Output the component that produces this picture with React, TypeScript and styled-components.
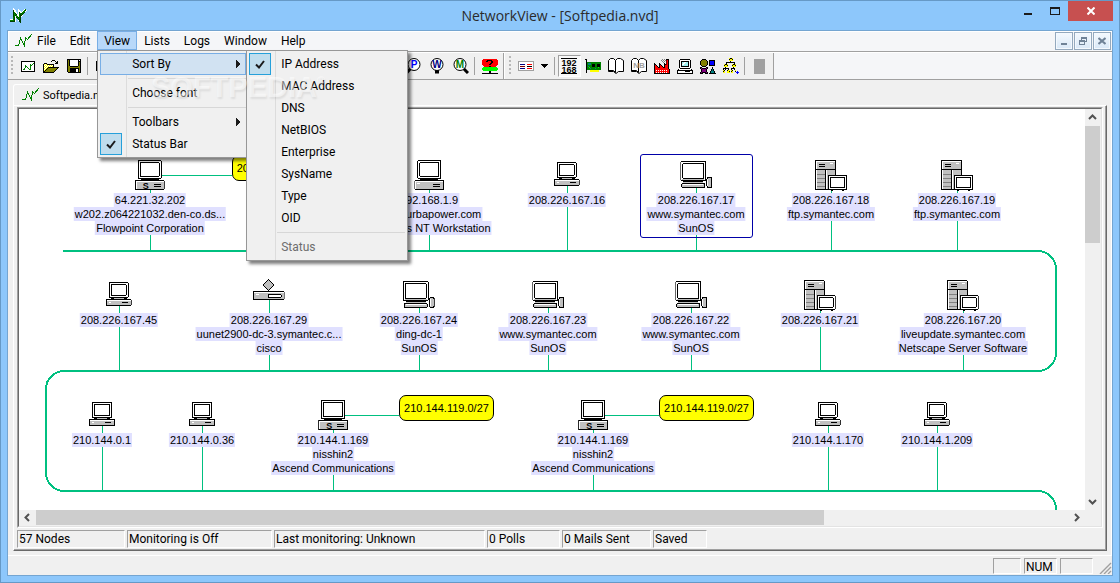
import React from 'react';
import styled, { createGlobalStyle, css } from 'styled-components';

const ui = 'Roboto, "Open Sans", sans-serif';
const arial = '"Liberation Sans", Arial, sans-serif';
const green = '#00c080';

const GlobalStyle = createGlobalStyle`
  * { box-sizing: border-box; }
  body { margin: 0; font-family: ${ui}; font-size: 12px; color: #000; background: #8dc7fb; }
  button { font: inherit; color: inherit; margin: 0; padding: 0; border: 0; background: none; }
  svg { display: block; flex: none; }
  ul { list-style: none; margin: 0; padding: 0; }
`;

/* ---------- window chrome ---------- */

const Frame = styled.div`
  display: flex;
  flex-direction: column;
  min-height: 100vh;
  padding: 0 6px 6px;
  border: 1px solid #6699c6;
  background: #8dc7fb;
`;

const TitleBar = styled.header`
  position: relative;
  display: flex;
  align-items: center;
  height: 29px;
  padding-left: 2px;
`;

const Title = styled.h1`
  flex: 1;
  margin: 0;
  padding-left: 79px;
  text-align: center;
  font-family: "Open Sans", "Noto Sans", sans-serif;
  font-size: 14px;
  font-weight: 400;
  line-height: 29px;
  color: #2b2b2b;
`;

const WindowButtons = styled.div`
  display: flex;
  align-self: flex-start;
`;

const WindowButton = styled.button<{ $close?: boolean }>`
  display: flex;
  align-items: center;
  justify-content: center;
  width: ${(p) => (p.$close ? 45 : 27)}px;
  height: 20px;
  background: ${(p) => (p.$close ? '#c75050' : 'transparent')};
`;

const Client = styled.div`
  flex: 1;
  display: flex;
  flex-direction: column;
  border: 1px solid #74a5d1;
  background: #f0f0f0;
`;

/* ---------- menus ---------- */

const MenuBar = styled.nav`
  display: flex;
  height: 21px;
  padding-left: 6px;
  border-bottom: 1px solid #a0a0a0;
  background: #f5f6f8;
  box-shadow: inset 1px 1px #fff;
`;

const MenuLogo = styled.span`
  width: 16px;
  padding-top: 3px;
`;

const MenuEntry = styled.div`
  position: relative;
  display: flex;
`;

const MenuTitle = styled.button<{ $open?: boolean }>`
  height: 19px;
  padding: 0 6px;
  border: 1px solid ${(p) => (p.$open ? '#78aee5' : 'transparent')};
  background: ${(p) => (p.$open ? '#b8d8f9' : 'transparent')};
  line-height: 19px;
`;

const Menu = styled.ul<{ $nested?: boolean }>`
  position: absolute;
  z-index: 2;
  top: ${(p) => (p.$nested ? '-3px' : '19px')};
  left: ${(p) => (p.$nested ? '146px' : '0')};
  width: ${(p) => (p.$nested ? 162 : 152)}px;
  padding: 2px;
  border: 1px solid #979797;
  background: linear-gradient(to right, transparent 28px, #dcdcdc 28px, #dcdcdc 29px, transparent 29px) #f0f0f0;
  box-shadow: 3px 3px 3px rgba(0, 0, 0, 0.5);
`;

const MenuItem = styled.li<{ $active?: boolean }>`
  position: relative;
  display: flex;
  height: 22px;
  ${(p) =>
    p.$active &&
    css`
      background: #d1e2f2;
      box-shadow: inset 0 0 0 1px #78aee5;
    `}
`;

const MenuCommand = styled.button`
  flex: 1;
  display: flex;
  align-items: center;
  text-align: left;
  line-height: 20px;
  white-space: nowrap;
  &:disabled { color: #6d6d6d; }
`;

const MenuCheck = styled.span<{ $on?: boolean }>`
  display: flex;
  align-items: center;
  justify-content: center;
  width: 22px;
  height: 22px;
  margin-right: 10px;
  border: 1px solid ${(p) => (p.$on ? '#26a0da' : 'transparent')};
  background: ${(p) => (p.$on ? '#c0dded' : 'transparent')};
`;

const MenuArrow = styled.span`
  margin-left: auto;
  padding-right: 5px;
`;

const MenuRule = styled.li`
  height: 1px;
  margin: 3px 0 3px 28px;
  background: #d7d7d7;
`;

const ChildButtons = styled.div`
  display: flex;
  gap: 1px;
  margin-left: auto;
  padding: 1px 1px 0 0;
`;

const ChildButton = styled.button`
  display: flex;
  align-items: center;
  justify-content: center;
  width: 18px;
  height: 18px;
  border: 1px solid #94a9be;
  background: linear-gradient(#f4f9fe, #d9e8f7);
  box-shadow: inset 0 0 0 1px #f4f9fe;
`;

/* ---------- toolbars ---------- */

const ToolbarRow = styled.div`
  display: flex;
  height: 28px;
  border-top: 1px solid #fff;
  border-bottom: 1px solid #a0a0a0;
  background: #f5f6f8;
`;

const Band = styled.div<{ $width?: number; $divided?: boolean }>`
  display: flex;
  align-items: center;
  width: ${(p) => (p.$width ? p.$width + 'px' : 'auto')};
  padding: ${(p) => (p.$divided ? '0 2px 0 1px' : '0 2px 0 0')};
  border-left: ${(p) => (p.$divided ? '1px solid #fff' : '0')};
  border-right: 1px solid #a0a0a0;
  background: #f0f0f0;
`;

const Grip = styled.span`
  width: 8px;
  height: 20px;
  background: repeating-linear-gradient(#b8b8b8 0 2px, transparent 2px 4px) 3px 0 / 2px 20px no-repeat;
`;

const ToolButton = styled.button<{ $pressed?: boolean; $narrow?: boolean }>`
  display: flex;
  align-items: center;
  justify-content: center;
  width: ${(p) => (p.$narrow ? 15 : 23)}px;
  height: 22px;
  ${(p) =>
    p.$pressed &&
    css`
      border: 1px solid;
      border-color: #a0a0a0 #fff #fff #a0a0a0;
      background: #f8f8f8;
    `}
`;

const ToolRule = styled.span`
  width: 6px;
  height: 18px;
  background: linear-gradient(#a0a0a0, #a0a0a0) 2px 0 / 1px 18px no-repeat;
`;

const ToolSpacer = styled.span`
  flex: 1;
`;

/* ---------- child window ---------- */

const Workspace = styled.main`
  flex: 1;
  display: flex;
  flex-direction: column;
  padding: 4px 4px 4px 5px;
  border-right: 1px solid #fff;
`;

const TabStrip = styled.div`
  display: flex;
  height: 21px;
`;

const Tab = styled.button`
  display: flex;
  align-items: center;
  gap: 4px;
  padding: 0 7px;
  border: 1px solid #fff;
  border-bottom: 0;
  border-radius: 3px 3px 0 0;
  font-size: 11px;
`;

const ChildFrame = styled.section`
  flex: 1;
  display: flex;
  flex-direction: column;
  padding: 1px 3px 0;
  border: 1px solid;
  border-color: #fff #696969 #696969 #fff;
  box-shadow: inset -1px -1px #a0a0a0;
`;

const ViewFrame = styled.div`
  flex: 1;
  display: flex;
  border: 1px solid;
  border-color: #a0a0a0 #fff #fff #a0a0a0;
`;

const View = styled.div`
  flex: 1;
  display: grid;
  grid-template-columns: minmax(0, 1fr) 16px;
  grid-template-rows: minmax(0, 1fr) 16px;
  border: 1px solid;
  border-color: #696969 #e3e3e3 #e3e3e3 #696969;
`;

const Canvas = styled.div`
  position: relative;
  overflow: hidden;
  background: #fff;
  font-family: ${arial};
  font-size: 11px;
`;

const Wires = styled.svg`
  position: absolute;
  top: 0;
  left: 0;
`;

const Node = styled.figure`
  position: absolute;
  display: flex;
  flex-direction: column;
  align-items: center;
  margin: 0;
  transform: translateX(-50%);
`;

const NodePicture = styled.div`
  display: flex;
  align-items: flex-start;
`;

const NodeLabel = styled.figcaption`
  display: flex;
  flex-direction: column;
  align-items: center;
  line-height: 14px;
  white-space: nowrap;
  span { padding: 0 1px; background: #e0e0ff; }
`;

const Selection = styled.div`
  position: absolute;
  width: 113px;
  height: 84px;
  border: 1px solid #0000a8;
  border-radius: 3px;
`;

const Subnet = styled.div`
  position: absolute;
  width: 95px;
  height: 26px;
  border: 1px solid #000;
  border-radius: 7px;
  background: #ff0;
  text-align: center;
  line-height: 24px;
  white-space: nowrap;
`;

const ScrollBar = styled.div<{ $vertical?: boolean }>`
  display: flex;
  flex-direction: ${(p) => (p.$vertical ? 'column' : 'row')};
  padding: ${(p) => (p.$vertical ? '0 1px 0 0' : '0 0 1px')};
  background: #f0f0f0;
`;

const ScrollButton = styled.button`
  display: flex;
  flex: 0 0 17px;
  align-items: center;
  justify-content: center;
`;

const ScrollTrack = styled.div<{ $vertical?: boolean }>`
  flex: 1;
  display: flex;
  flex-direction: ${(p) => (p.$vertical ? 'column' : 'row')};
`;

const ScrollThumb = styled.div<{ $share: string }>`
  flex: 0 0 ${(p) => p.$share};
  background: #cdcdcd;
`;

/* ---------- status bars ---------- */

const ChildStatus = styled.footer`
  display: flex;
  gap: 2px;
  height: 22px;
  padding: 2px 0;
`;

const MainStatus = styled.footer`
  display: flex;
  justify-content: flex-end;
  gap: 3px;
  height: 20px;
  padding: 2px 0 1px;
  border-top: 1px solid #fff;
`;

const StatusCell = styled.span<{ $width: number }>`
  width: ${(p) => p.$width}px;
  padding-left: 1px;
  border: 1px solid;
  border-color: #a0a0a0 #fff #fff #a0a0a0;
  line-height: 16px;
  white-space: nowrap;
`;

const SizeGrip = styled.span`
  display: flex;
  align-items: flex-end;
  width: 16px;
`;

const Watermark = styled.div`
  position: absolute;
  z-index: 3;
  top: 70px;
  left: 151px;
  font: 700 29px/34px ${arial};
  color: rgba(255, 255, 255, 0.5);
  text-shadow: 1px 2px 2px rgba(0, 0, 0, 0.08);
  pointer-events: none;
  sup { font-size: 11px; line-height: 10px; vertical-align: 13px; }
`;

/* ---------- drawings ---------- */

const Svg = ({ w, h, children }: { w: number; h: number; children: React.ReactNode }) => (
  <svg width={w} height={h} viewBox={`0 0 ${w} ${h}`} fill="none" shapeRendering="crispEdges" aria-hidden="true">
    {children}
  </svg>
);

/* Draws a bitmap from rows of palette letters; a dot is transparent. */
const palette: Record<string, string> = {
  k: '#000', w: '#fff', g: '#808080', c: '#c0c0c0', r: '#f00', R: '#800000', y: '#ff0', Y: '#808000',
  b: '#00f', B: '#000080', l: '#0f0', G: '#008000', t: '#008080', p: '#800080', a: '#a0f0f0', h: '#a0a0a0',
};
const Bitmap = ({ rows }: { rows: string[] }) => {
  const w = Math.max(...rows.map((r) => r.length));
  return (
    <Svg w={w} h={rows.length}>
      {rows.flatMap((row, y) =>
        [...row.matchAll(/([^.])\1*/g)].map((m) => (
          <rect key={`${m.index}-${y}`} x={m.index} y={y} width={m[0].length} height={1} fill={palette[m[1]]} />
        )),
      )}
    </Svg>
  );
};

const Pulse = () => (
  <Svg w={18} h={14}>
    <path d="M0.5 11.5H4.5L6.5 4.5L10.5 11.5L11.5 3.5L13.5 5.5L17.5 0.5" stroke="#008000" />
  </Svg>
);

const AppIcon = () => (
  <Svg w={18} h={15}>
    <path d="M1 12.5H5.5V3.5L10.5 11.5V4.5L12.5 6.5L16.5 1.5" stroke="#fff" strokeWidth="3" />
    <path d="M1 13H5V4.5L10.5 12V5L12.5 6.5L16.5 2" stroke="#004000" strokeWidth="2" />
    <path d="M1 12.5H4.5L5.5 5L10 11.5L11 5L12.5 6.5L16.5 1.5" stroke="#008000" strokeWidth="1" />
  </Svg>
);

const CheckMark = () => (
  <svg width="10" height="9" viewBox="0 0 10 9" fill="none" aria-hidden="true">
    <path d="M1 4.5L4 7.5L9 1" stroke="#1b1b1b" strokeWidth="2" />
  </svg>
);

const Chevron = ({ turn }: { turn: number }) => (
  <svg width="9" height="9" viewBox="0 0 9 9" fill="none" aria-hidden="true">
    <path d="M1 6L4.5 2.5L8 6" stroke="#505050" strokeWidth="2" transform={`rotate(${turn} 4.5 4.5)`} />
  </svg>
);

const Lens = ({ letter, color, side }: { letter: string; color: string; side: 'left' | 'down' | 'right' }) => (
  <svg width="17" height="16" viewBox="0 0 17 16" fill="none" aria-hidden="true">
    {side === 'left' && <path d="M4.5 10.5L1 14.5" stroke="#000" strokeWidth="3" />}
    {side === 'down' && <path d="M8 11V15.5" stroke="#000" strokeWidth="4" />}
    {side === 'right' && <path d="M11 10L16 15" stroke="#000" strokeWidth="3" />}
    <circle cx="8" cy="6.5" r="6" fill="#fff" stroke="#000" />
    <text x="8" y="10" textAnchor="middle" fontFamily="Liberation Sans" fontWeight="700" fontSize="10" fill={color}>
      {letter}
    </text>
  </svg>
);

const pulseDoc = [
  'kkkkkkkkkkkkkk', 'kwwwwwwwwwwwwk', 'kwwwwwwwwwwwGk', 'kwwwwwwwwGwGwk', 'kwwwGwwwwGGwwk', 'kwwwGGwwwGwwwk',
  'kwwwGwGwwGwwwk', 'kwwGwwwGwGwwwk', 'kwGGwwwwGGwwwk', 'kwwwwwwwwwwwwk', 'kkkkkkkkkkkkkk',
];
const openFolder = [
  '.........kkk....', '........k...k.k.', '.............kk.', '.kkk........kkk.', 'kywykkkkkkk.....', 'kwywywywywk.....',
  'kywywywywyk.....', 'kwywykkkkkkkkkkk', 'kywykYYYYYYYYYk.', 'kwykYYYYYYYYYk..', 'kykYYYYYYYYYk...', 'kkYYYYYYYYYk....',
  'kkkkkkkkkkk.....',
];
const disk = [
  'kkkkkkkkkkkkkk', 'kYkwwwwwwwwkwk', 'kYkwwwwwwwwkkk', 'kYkwwwwwwwwkYk', 'kYkwwwwwwwwkYk', 'kYkwwwwwwwwkYk',
  'kYkwwwwwwwwkYk', 'kYYkkkkkkkkYYk', 'kYYYYYYYYYYYYk', 'kYYkkkkkkkkkYk', 'kYYkkkkkkwwkYk', 'kYYkkkkkkwwkYk',
  'kYYkkkkkkwwkYk', '.kkkkkkkkkkkkk',
];
const sheet = [
  'kkkkkkkkkkkkkk', 'kwwwwwwwwwwwwk', 'kwwwwwwwwwwwwk', 'kwwwwwwwwwwwwk', 'kwwwwwwwwwwwwk', 'kwwwwwwwwwwwwk', 'kwwwwwwwwwwwwk',
  'kwwwwwwwwwwwwk', 'kwwwwwwwwwwwwk', 'kkkkkkkkkkkkkk',
];
const detailList = [
  'hhhhhhhhhhhhhhhh', 'hwwwwwwwwwwwwwwh', 'hwwwwwwwwwwwwwwh', 'hwBBBBBwwrrrrrwh', 'hwwwwwwwwwwwwwwh', 'hwRRRRRwwkkkkkwh',
  'hwwwwwwwwwwwwwwh', 'hwBBBBBwwrrrrrwh', 'hwwwwwwwwwwwwwwh', 'hhhhhhhhhhhhhhhh',
];
const card = [
  'kk..............', '.k..............', '.k..............', '.kGGGGGGGGGGGGGG', '.kGtttGGGGGGGGGG', '.kGtttGkkkGGkkkG', '.kGGGGGkkkGGkkkG',
  '.kGtGGGkkkGGkkkG', '.kGGlGGGGGGGGlGG', '.kGGGtGGGGtGGGGG', '.kGGGGGGGGGGGGGG', '.k...yyyyyyyyy..', '.k...yyyyyyyyy..', '.k..............',
];
const factory = [
  '........g.g.kkk.', '.......g.g.gRrk.', '........g.g.Rrk.', '.........g..Rrk.', 'k....k....k.Rrk.', 'kk...kk...kkRrk.', 'krk..krk..krrrk.',
  'krrk.krrk.krrrk.', 'krrrkkrrrkkrrrk.', 'krrrrrrrrrrrrrk.', 'krrrrrrrrrrrrrrk', 'krwrwrwrwrwrwrrk', 'krrrrrrrrrrrrrrk',
  'krwrwrwrwrwrwrrk', 'kkkkkkkkkkkkkkkk',
];
const desktopPc = [
  '...kkkkkkkkkk...', '..kwwwwwwwwwwk..', '..kwkkkkkkkkwk..', '..kwkaawwaakwk..', '..kwkawwaaakwk..', '..kwkwwaaaakwk..', '..kwkaaaaaakwk..',
  '..kwkkkkkkkkwk..', '..kwwwwwwwwwwk..', '...kkkkkkkkkk...', '.kwwwwwwwwwwwwk.', 'kkkkkkkkkkkkkkkk', 'kwwwwwwwkkkkkwwk', 'kwwwwwwwwwwwwwwk', 'kkkkkkkkkkkkkkkk',
];
const shapes = [
  '..kkkk..........', '.kYYYYk..kkkkkk.', 'kYYYYYYk.kbbbbk.', 'kYYYYYYk.kbbbbk.', 'kYYYYYYk.kbbbbk.', 'kYYYYYYk.kbbbbk.', '.kYYYYk..kkkkkk.', '..kkkk..........',
  'kk....kk....k...', 'kpkkkkpk....k...', '.kppppk....ktk..', '.kppppk....ktk..', '.kppppk...ktttk.', 'kpkkkkpk..ktttk.', 'kkk..kkk.kkkkkkk',
];
const tree = [
  '......ykky......', '......kyyk......', '......yyyy......', '.......k........', '...kkkkkkkkk....', '...k.......k....', '.ykky....ykky...',
  '.kyyk....kyyk...', '.yyyy....yyyy...', '..k.......k.....', 'kkkkkk..kkkk....', 'k.k..k..k..k....', 'yk..kyy.yk..y...', 'ky..yyk.ky..k.b.',
  'yy..yyy.yy...bbb', '..............b.',
];
const unknownHost = [
  '.rrrrrrrrrrrrrr.', 'rrrrrkkkkkrrrrrr', 'rrrrkkrrrkkrrrrr', 'rrrrrrrrrkkrrrrr', 'rrrrrrrrkkrrrrrr', 'rrrrrrrkkrrrrrrr', '.rrrrrrrrrrrrrr.',
  '..rrrrrkkrrrrr..', '.llllllllllllll.', 'llllllllllllllll', 'llllllllllllllll', '.llllllllllllll.', '.......kk.......', '.......kk.......', 'kkkkkkkkkkkkkkkk',
];

const AddressIcon = () => (
  <Svg w={17} h={16}>
    <path d="M0 0.5H16M0 15.5H16" stroke="#000" />
    <g fontFamily="Liberation Sans" fontWeight="700" fontSize="9" fill="#000" textAnchor="middle">
      <text x="8" y="8">192</text>
      <text x="8" y="15">168</text>
    </g>
  </Svg>
);

const BookIcon = ({ mark }: { mark?: string }) => (
  <svg width="16" height="16" viewBox="0 0 16 16" aria-hidden="true">
    <path
      d="M0.5 2.5L2.5 0.5H5.5L7.5 2.5L9.5 0.5H12.5L15.5 2.5V13.5H10.5L8 15.5L5.5 13.5H0.5Z"
      fill="#fff"
      stroke="#000"
    />
    <path d="M1 12.5H5.5L7.5 14.5V2.5" fill="none" stroke="#000" />
    {mark && (
      <text x="8" y="10" textAnchor="middle" fontFamily="Liberation Sans" fontWeight="700" fontSize="8" fill="#a0a0a0">
        {mark}
      </text>
    )}
  </svg>
);

const Workstation = ({ snmp }: { snmp?: boolean }) => (
  <Svg w={30} h={31}>
    <path d="M6 19.5H24" stroke="#000" />
    <rect x="3.5" y="0.5" width="23" height="18" rx="1" fill="#fff" stroke="#000" />
    <rect x="5.5" y="2.5" width="19" height="14" rx="1" fill="#fff" stroke="#000" />
    <rect x="0.5" y="20.5" width="29" height="9" rx="1" fill="#c0c0c0" stroke="#000" />
    <path d="M1 21.5H29M1.5 21V29" stroke="#fff" />
    <path d="M19 24.5H26M19 26.5H26" stroke="#000" />
    {snmp ? (
      <text x="11" y="29" textAnchor="middle" fontFamily="Liberation Sans" fontWeight="700" fontSize="9" fill="#000">S</text>
    ) : (
      <path d="M3 23.5H6" stroke="#fff" />
    )}
  </Svg>
);

const SmallPc = () => (
  <Svg w={26} h={24}>
    <path d="M5 16.5H8M18 16.5H21" stroke="#000" strokeWidth="1" />
    <path d="M8 16.5H18" stroke="#c0c0c0" />
    <rect x="3.5" y="0.5" width="19" height="15" rx="1" fill="#fff" stroke="#000" />
    <rect x="5.5" y="2.5" width="15" height="11" rx="1" fill="#fff" stroke="#000" />
    <rect x="0.5" y="17.5" width="25" height="6" rx="1" fill="#c0c0c0" stroke="#000" />
    <path d="M1 18.5H25M3 20.5H5" stroke="#fff" />
    <path d="M16 20.5H22" stroke="#000" />
  </Svg>
);

const SunStation = () => (
  <Svg w={32} h={28}>
    <rect x="0.5" y="0.5" width="25" height="19" rx="1" fill="#fff" stroke="#000" />
    <rect x="2.5" y="2.5" width="21" height="15" rx="1" fill="#fff" stroke="#000" />
    <path d="M2 18.5H24" stroke="#c0c0c0" />
    <path d="M3 20.5H23" stroke="#000" />
    <path d="M3 21.5H23" stroke="#c0c0c0" />
    <rect x="1.5" y="22.5" width="23" height="4" rx="1" fill="#c0c0c0" stroke="#000" />
    <path d="M3 23.5H23" stroke="#fff" />
    <rect x="26.5" y="16.5" width="5" height="10" rx="2" fill="#c0c0c0" stroke="#000" />
    <path d="M27.5 18V25" stroke="#fff" />
  </Svg>
);

const ServerTower = () => (
  <Svg w={32} h={31}>
    <rect x="0.5" y="0.5" width="20" height="29" rx="1" fill="#c0c0c0" stroke="#000" />
    <path d="M1.5 1V29M1 1.5H20" stroke="#fff" />
    <path d="M4 4.5H10M4 6.5H10M1 9.5H20M10.5 10V29" stroke="#000" />
    <path d="M15 3.5H18M11.5 10V29" stroke="#fff" />
    <path d="M2 14.5H10M2 18.5H10M2 22.5H10M2 26.5H10" stroke="#808080" />
    <rect x="13.5" y="15.5" width="18" height="14" rx="1" fill="#fff" stroke="#000" />
    <rect x="15.5" y="17.5" width="14" height="10" rx="1" fill="#fff" stroke="#000" />
    <path d="M16 30.5H18M27 30.5H29" stroke="#000" />
  </Svg>
);

const Router = () => (
  <Svg w={32} h={22}>
    <path d="M16 0.5L21.5 6L16 11.5L10.5 6Z" fill="#c0c0c0" stroke="#000" />
    <rect x="0.5" y="12.5" width="31" height="8" rx="1" fill="#c0c0c0" stroke="#000" />
    <path d="M1 13.5H31M3 15.5H6" stroke="#fff" />
    <rect x="15.5" y="15.5" width="13" height="3" rx="1" fill="#fff" stroke="#000" />
  </Svg>
);

/* lift: picture top above the label; drop: where the wire leaves the picture, above the label. */
const kinds = {
  snmp: { Icon: () => <Workstation snmp />, lift: 33, drop: 3 },
  nt: { Icon: () => <Workstation />, lift: 33, drop: 3 },
  pc: { Icon: SmallPc, lift: 31, drop: 7 },
  sun: { Icon: SunStation, lift: 32, drop: 5 },
  server: { Icon: ServerTower, lift: 33, drop: 3 },
  router: { Icon: Router, lift: 34, drop: 13 },
};

/* ---------- data ---------- */

type Host = { x: number; row: number; kind: keyof typeof kinds; lines: string[] };

const rowLabelTop = [84, 204, 324];

const hosts: Host[] = [
  { x: 131, row: 0, kind: 'snmp', lines: ['64.221.32.202', 'w202.z064221032.den-co.ds...', 'Flowpoint Corporation'] },
  { x: 410, row: 0, kind: 'nt', lines: ['192.168.1.9', 'www.turbapower.com', 'Windows NT Workstation'] },
  { x: 548, row: 0, kind: 'pc', lines: ['208.226.167.16'] },
  { x: 677, row: 0, kind: 'sun', lines: ['208.226.167.17', 'www.symantec.com', 'SunOS'] },
  { x: 812, row: 0, kind: 'server', lines: ['208.226.167.18', 'ftp.symantec.com'] },
  { x: 938, row: 0, kind: 'server', lines: ['208.226.167.19', 'ftp.symantec.com'] },
  { x: 100, row: 1, kind: 'pc', lines: ['208.226.167.45'] },
  { x: 250, row: 1, kind: 'router', lines: ['208.226.167.29', 'uunet2900-dc-3.symantec.c...', 'cisco'] },
  { x: 400, row: 1, kind: 'sun', lines: ['208.226.167.24', 'ding-dc-1', 'SunOS'] },
  { x: 529, row: 1, kind: 'sun', lines: ['208.226.167.23', 'www.symantec.com', 'SunOS'] },
  { x: 672, row: 1, kind: 'sun', lines: ['208.226.167.22', 'www.symantec.com', 'SunOS'] },
  { x: 801, row: 1, kind: 'server', lines: ['208.226.167.21'] },
  { x: 944, row: 1, kind: 'server', lines: ['208.226.167.20', 'liveupdate.symantec.com', 'Netscape Server Software'] },
  { x: 83, row: 2, kind: 'pc', lines: ['210.144.0.1'] },
  { x: 183, row: 2, kind: 'pc', lines: ['210.144.0.36'] },
  { x: 314, row: 2, kind: 'snmp', lines: ['210.144.1.169', 'nisshin2', 'Ascend Communications'] },
  { x: 574, row: 2, kind: 'snmp', lines: ['210.144.1.169', 'nisshin2', 'Ascend Communications'] },
  { x: 809, row: 2, kind: 'pc', lines: ['210.144.1.170'] },
  { x: 918, row: 2, kind: 'pc', lines: ['210.144.1.209'] },
];

const subnets = [
  { x: 213, row: 0, from: 143, name: '208.226.167.0/27' },
  { x: 380, row: 2, from: 326, name: '210.144.119.0/27' },
  { x: 640, row: 2, from: 586, name: '210.144.119.0/27' },
];

const sortKeys = ['IP Address', 'MAC Address', 'DNS', 'NetBIOS', 'Enterprise', 'SysName', 'Type', 'OID'];

const Command = ({ label, checked, disabled, arrow }: { label: string; checked?: boolean; disabled?: boolean; arrow?: boolean }) => (
  <MenuCommand role="menuitem" disabled={disabled}>
    <MenuCheck $on={checked}>{checked && <CheckMark />}</MenuCheck>
    {label}
    {arrow && (
      <MenuArrow>
        <Svg w={5} h={8}><path d="M0 0L4 4L0 8Z" fill="#1b1b1b" /></Svg>
      </MenuArrow>
    )}
  </MenuCommand>
);

const ViewMenu = () => (
  <Menu role="menu" aria-label="View">
    <MenuItem $active>
      <Command label="Sort By" arrow />
      <Menu $nested role="menu" aria-label="Sort By">
        {sortKeys.map((key, i) => (
          <MenuItem key={key}><Command label={key} checked={i === 0} /></MenuItem>
        ))}
        <MenuRule role="separator" />
        <MenuItem><Command label="Status" disabled /></MenuItem>
      </Menu>
    </MenuItem>
    <MenuRule role="separator" />
    <MenuItem><Command label="Choose font" /></MenuItem>
    <MenuRule role="separator" />
    <MenuItem><Command label="Toolbars" arrow /></MenuItem>
    <MenuItem><Command label="Status Bar" checked /></MenuItem>
  </Menu>
);

const NetworkMap = () => (
  <Canvas>
    <Wires width="1066" height="420" fill="none" stroke={green} shapeRendering="crispEdges">
      <path
        strokeWidth="2"
        d="M44 142H1019A18 18 0 0 1 1037 160V244A18 18 0 0 1 1019 262H45A18 18 0 0 0 27 280V364A18 18 0 0 0 45 382H1019A18 18 0 0 1 1037 400V420"
      />
      {hosts.map((h) => (
        <path key={`${h.x}-${h.row}`} d={`M${h.x + 0.5} ${rowLabelTop[h.row] - kinds[h.kind].drop}V${rowLabelTop[h.row] + 57}`} />
      ))}
      {subnets.map((s) => (
        <path key={s.x} d={`M${s.from} ${rowLabelTop[s.row] - 17.5}H${s.x}`} />
      ))}
    </Wires>
    <Selection style={{ left: 621, top: 45 }} />
    {hosts.map((h) => {
      const { Icon, lift } = kinds[h.kind];
      return (
        <Node key={`${h.x}-${h.row}`} style={{ left: h.x, top: rowLabelTop[h.row] - lift }}>
          <NodePicture style={{ height: lift }}><Icon /></NodePicture>
          <NodeLabel>{h.lines.map((line) => <span key={line}>{line}</span>)}</NodeLabel>
        </Node>
      );
    })}
    {subnets.map((s) => (
      <Subnet key={s.x} style={{ left: s.x, top: rowLabelTop[s.row] - 38 }}>{s.name}</Subnet>
    ))}
  </Canvas>
);

const Toolbars = () => (
  <ToolbarRow role="toolbar">
    <Band $width={496}>
      <Grip />
      <ToolButton aria-label="New"><Bitmap rows={pulseDoc} /></ToolButton>
      <ToolButton aria-label="Open"><Bitmap rows={openFolder} /></ToolButton>
      <ToolButton aria-label="Save"><Bitmap rows={disk} /></ToolButton>
      <ToolRule />
      <ToolButton aria-label="Print"><Bitmap rows={sheet} /></ToolButton>
      <ToolSpacer />
      <ToolButton aria-label="Find ports"><Lens letter="P" color="#00f" side="left" /></ToolButton>
      <ToolButton aria-label="Find web servers"><Lens letter="W" color="#000080" side="down" /></ToolButton>
      <ToolButton aria-label="Find MIBs"><Lens letter="M" color="#008000" side="right" /></ToolButton>
      <ToolRule />
      <ToolButton aria-label="Monitor"><Bitmap rows={unknownHost} /></ToolButton>
    </Band>
    <Band $divided>
      <Grip />
      <ToolButton aria-label="Details"><Bitmap rows={detailList} /></ToolButton>
      <ToolButton $narrow aria-label="More details">
        <Svg w={7} h={4}><path d="M0 0H7L3.5 4Z" fill="#000" /></Svg>
      </ToolButton>
      <ToolRule />
      <ToolButton $pressed aria-label="Show addresses"><AddressIcon /></ToolButton>
      <ToolButton aria-label="Show MAC"><Bitmap rows={card} /></ToolButton>
      <ToolButton aria-label="Show DNS"><BookIcon /></ToolButton>
      <ToolButton aria-label="Show NetBIOS"><BookIcon mark="NB" /></ToolButton>
      <ToolButton aria-label="Show enterprise"><Bitmap rows={factory} /></ToolButton>
      <ToolButton aria-label="Show system name"><Bitmap rows={desktopPc} /></ToolButton>
      <ToolButton aria-label="Show type"><Bitmap rows={shapes} /></ToolButton>
      <ToolButton aria-label="Show OID"><Bitmap rows={tree} /></ToolButton>
      <ToolRule />
      <ToolButton aria-label="Status">
        <Svg w={11} h={15}><rect width="11" height="15" rx="1" fill="#a0a0a0" /></Svg>
      </ToolButton>
    </Band>
  </ToolbarRow>
);

export default function App() {
  return (
    <Frame>
      <GlobalStyle />
      <TitleBar>
        <AppIcon />
        <Title>NetworkView - [Softpedia.nvd]</Title>
        <WindowButtons>
          <WindowButton aria-label="Minimize">
            <Svg w={8} h={8}><path d="M0 6H8V8H0Z" fill="#1b1b1b" /></Svg>
          </WindowButton>
          <WindowButton aria-label="Maximize">
            <Svg w={10} h={8}><path d="M0.5 0V7.5H9.5V0M0 1H10" stroke="#1b1b1b" /><path d="M0 0H10V2H0Z" fill="#1b1b1b" /></Svg>
          </WindowButton>
          <WindowButton $close aria-label="Close">
            <svg width="8" height="8" viewBox="0 0 8 8"><path d="M0.5 0.5L7.5 7.5M7.5 0.5L0.5 7.5" stroke="#fff" strokeWidth="2" /></svg>
          </WindowButton>
        </WindowButtons>
      </TitleBar>
      <Client>
        <MenuBar>
          <MenuLogo><Pulse /></MenuLogo>
          <MenuEntry><MenuTitle>File</MenuTitle></MenuEntry>
          <MenuEntry><MenuTitle>Edit</MenuTitle></MenuEntry>
          <MenuEntry>
            <MenuTitle $open aria-haspopup="menu" aria-expanded="true">View</MenuTitle>
            <ViewMenu />
          </MenuEntry>
          <MenuEntry><MenuTitle>Lists</MenuTitle></MenuEntry>
          <MenuEntry><MenuTitle>Logs</MenuTitle></MenuEntry>
          <MenuEntry><MenuTitle>Window</MenuTitle></MenuEntry>
          <MenuEntry><MenuTitle>Help</MenuTitle></MenuEntry>
          <ChildButtons>
            <ChildButton aria-label="Minimize document">
              <Svg w={8} h={8}><path d="M1 6H7V8H1Z" fill="#6f8297" /></Svg>
            </ChildButton>
            <ChildButton aria-label="Restore document">
              <Svg w={8} h={8}><path d="M2.5 3V0.5H7.5V4.5H6M2 1H8" stroke="#6f8297" /><path d="M0.5 3.5H5.5V7.5H0.5ZM0 4H6" stroke="#6f8297" /></Svg>
            </ChildButton>
            <ChildButton aria-label="Close document">
              <svg width="8" height="8" viewBox="0 0 8 8"><path d="M0.5 1L7.5 7M7.5 1L0.5 7" stroke="#6f8297" strokeWidth="2" /></svg>
            </ChildButton>
          </ChildButtons>
        </MenuBar>
        <Toolbars />
        <Workspace>
          <TabStrip role="tablist">
            <Tab role="tab" aria-selected="true"><Pulse />Softpedia.nvd</Tab>
          </TabStrip>
          <ChildFrame>
            <ViewFrame>
              <View>
                <NetworkMap />
                <ScrollBar $vertical>
                  <ScrollButton aria-label="Scroll up"><Chevron turn={0} /></ScrollButton>
                  <ScrollTrack $vertical><ScrollThumb $share="32%" /></ScrollTrack>
                  <ScrollButton aria-label="Scroll down"><Chevron turn={180} /></ScrollButton>
                </ScrollBar>
                <ScrollBar>
                  <ScrollButton aria-label="Scroll left"><Chevron turn={270} /></ScrollButton>
                  <ScrollTrack><ScrollThumb $share="76.4%" /></ScrollTrack>
                  <ScrollButton aria-label="Scroll right"><Chevron turn={90} /></ScrollButton>
                </ScrollBar>
                <ScrollBar />
              </View>
            </ViewFrame>
            <ChildStatus>
              <StatusCell $width={108}>57 Nodes</StatusCell>
              <StatusCell $width={145}>Monitoring is Off</StatusCell>
              <StatusCell $width={211}>Last monitoring: Unknown</StatusCell>
              <StatusCell $width={73}>0 Polls</StatusCell>
              <StatusCell $width={89}>0 Mails Sent</StatusCell>
              <StatusCell $width={54}>Saved</StatusCell>
            </ChildStatus>
          </ChildFrame>
        </Workspace>
        <MainStatus>
          <StatusCell $width={28} />
          <StatusCell $width={33}>NUM</StatusCell>
          <StatusCell $width={33} />
          <SizeGrip>
            <svg width="16" height="12" viewBox="0 0 16 12" fill="none" aria-hidden="true">
              <path d="M4 12L15 1M8 12L15 5M12 12L15 9" stroke="#a0a0a0" strokeWidth="1.4" />
            </svg>
          </SizeGrip>
        </MainStatus>
      </Client>
      <Watermark aria-hidden="true">SOFTPEDIA<sup>®</sup></Watermark>
    </Frame>
  );
}
